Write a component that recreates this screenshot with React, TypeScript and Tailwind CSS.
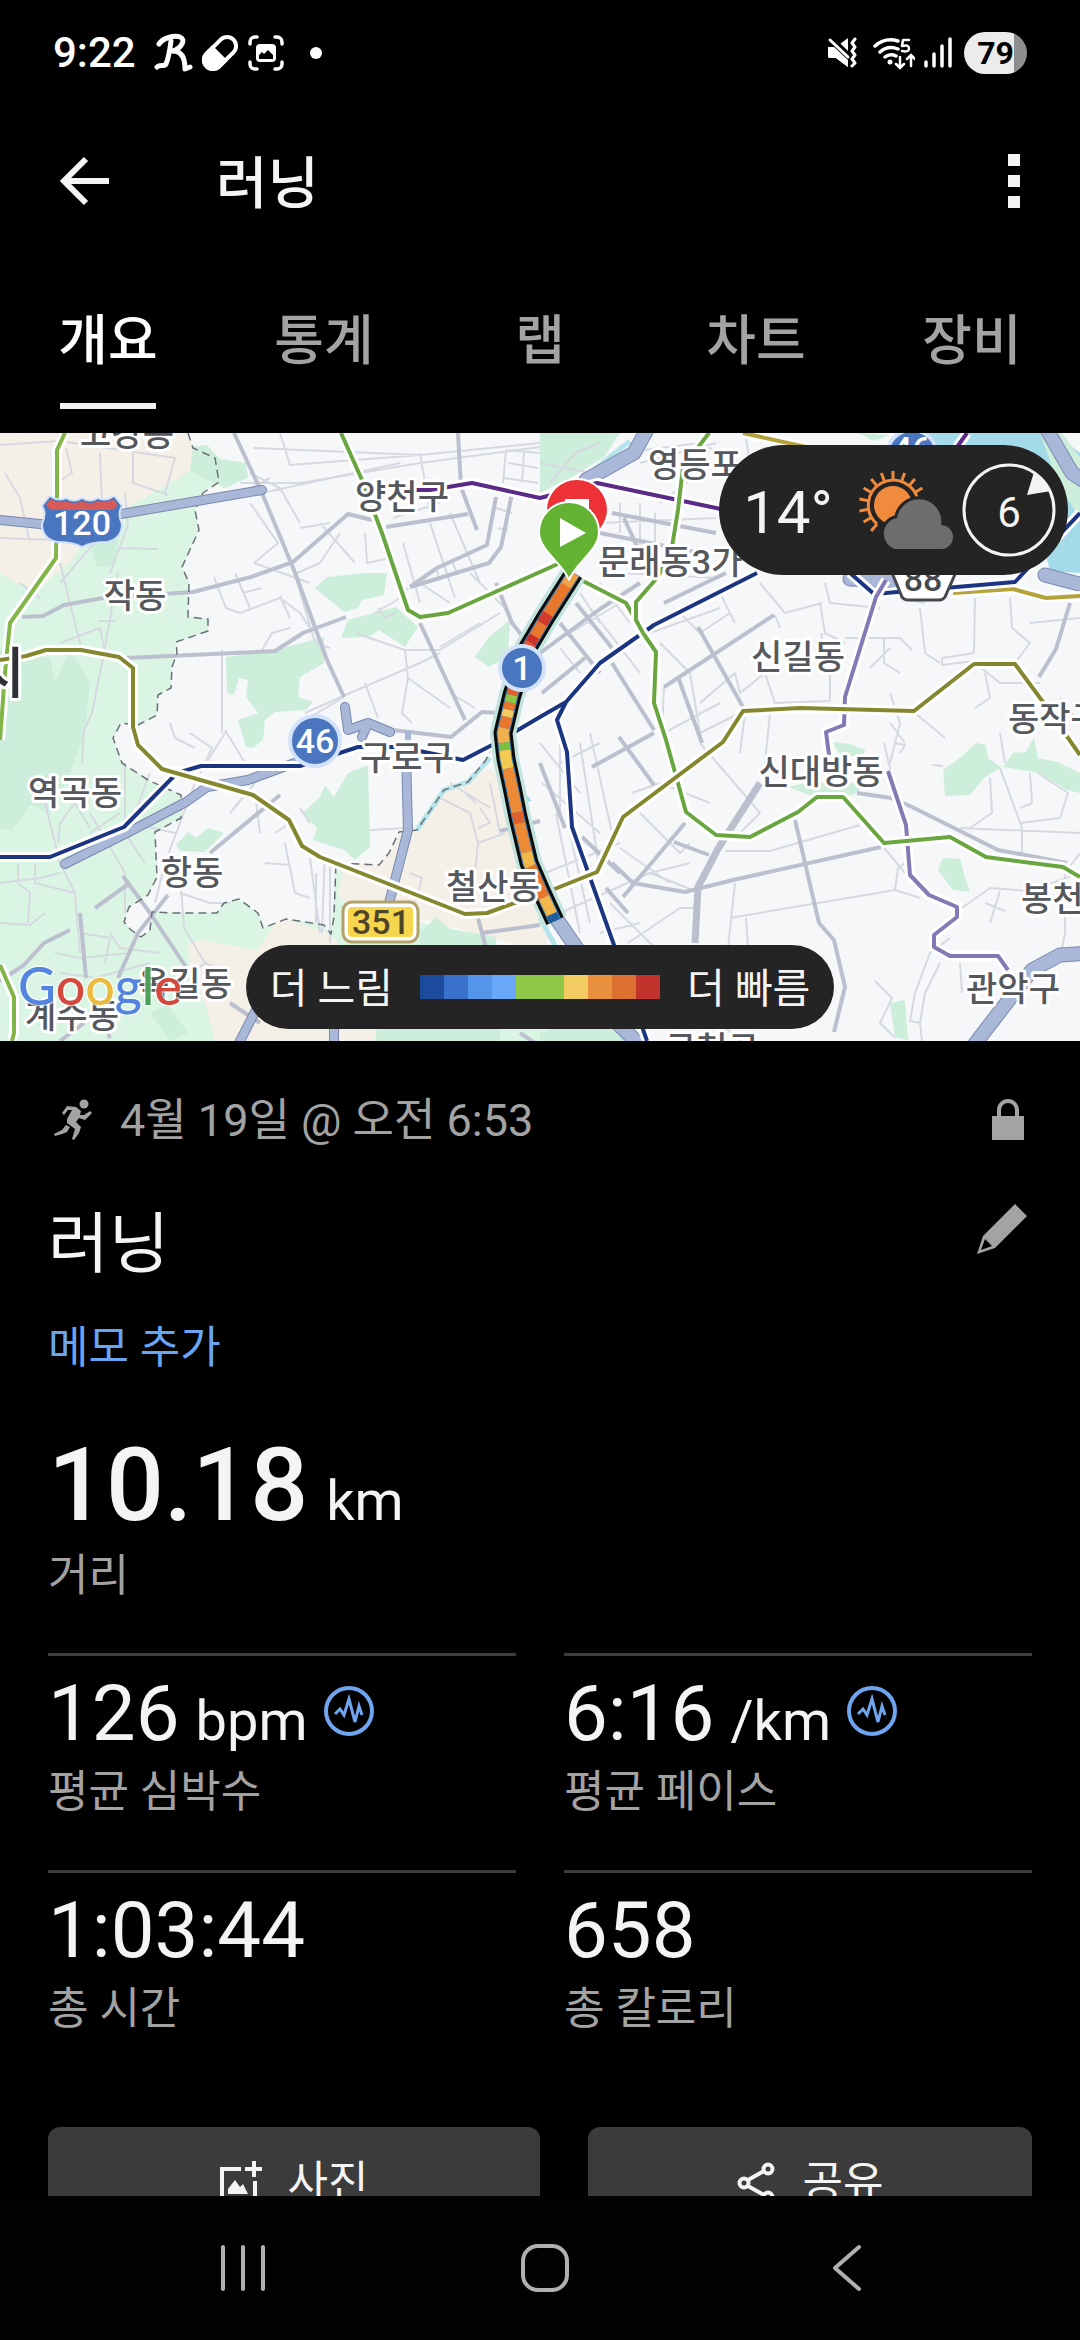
import { useState } from 'react';

const TABS = ['개요', '통계', '랩', '차트', '장비'];

const PACE_COLORS = [
  '#1c4a9c',
  '#3a72cb',
  '#5495ea',
  '#6ba7f8',
  '#8fc746',
  '#8fc746',
  '#f3cb63',
  '#e9903f',
  '#db7030',
  '#c2332c',
];

// start and length are percent of the route
const TRACK = [
  { start: 0, length: 5, color: '#f2a04a' },
  { start: 4, length: 10, color: '#e8762c' },
  { start: 13, length: 3, color: '#d43a2a' },
  { start: 16, length: 5, color: '#e8762c' },
  { start: 20, length: 2, color: '#c9302a' },
  { start: 22, length: 6, color: '#e5522b' },
  { start: 28, length: 2, color: '#8fc746' },
  { start: 30, length: 7, color: '#e0602c' },
  { start: 37, length: 2, color: '#8fc746' },
  { start: 39, length: 2, color: '#e8762c' },
  { start: 41, length: 2, color: '#f3cb63' },
  { start: 43, length: 3, color: '#e8762c' },
  { start: 46, length: 4, color: '#f2b04c' },
  { start: 50, length: 2, color: '#7cbf3a' },
  { start: 52, length: 5, color: '#f3cb50' },
  { start: 57, length: 12, color: '#ec8a35' },
  { start: 69, length: 3, color: '#e0602c' },
  { start: 72, length: 8, color: '#ec8a35' },
  { start: 80, length: 4, color: '#f3b84c' },
  { start: 84, length: 9, color: '#e8762c' },
  { start: 93, length: 5, color: '#f3b84c' },
  { start: 98, length: 2, color: '#1d5f9e' },
];

const ROUTE = 'M574 140 L546 184 L527 216 L512 262 L503 300 L506 326 L512 354 L518 384 L529 430 L542 460 L555 488';

// rays of the weather sun, in degrees clockwise from the top
const SUN_RAYS = [-140, -120, -100, -80, -60, -40, -20, 0, 20, 40, 60, 80];

const LABELS: { text: string; x: number; y: number; anchor?: 'start' | 'middle' | 'end' }[] = [
  { text: '고강동', x: 127, y: 13 },
  { text: '양천구', x: 402, y: 76 },
  { text: '작동', x: 135, y: 175 },
  { text: '영등포', x: 648, y: 44, anchor: 'start' },
  { text: '문래동3가', x: 598, y: 141, anchor: 'start' },
  { text: '신길동', x: 798, y: 236 },
  { text: '신대방동', x: 821, y: 351 },
  { text: '동작구', x: 1008, y: 298, anchor: 'start' },
  { text: '봉천동', x: 1021, y: 478, anchor: 'start' },
  { text: '관악구', x: 1013, y: 568 },
  { text: '역곡동', x: 75, y: 372 },
  { text: '항동', x: 192, y: 452 },
  { text: '철산동', x: 493, y: 466 },
  { text: '구로구', x: 407, y: 337 },
  { text: '옥길동', x: 185, y: 563 },
  { text: '계수동', x: 72, y: 595 },
  { text: '금천구', x: 712, y: 628 },
];

const LINES: { color: string; d: string }[] = [
  { color: '#5a2a86', d: 'M406 57 L430 57 L472 50 L540 65 L597 50 L716 75 L780 90 M967 0 L957 14' },
  { color: '#b5a23c', d: 'M743 0 L806 14 M953 160 L1013 156 L1046 165 L1080 163' },
  { color: '#1b3583', d: 'M0 424 L50 424 L124 394 L177 340 L201 333 L300 333 L358 314 L400 314 L463 327 L496 310 L540 284 L566 269 L600 230 L654 192 L757 140 M566 269 L557 287 L567 319 L572 394 L614 512 L647 608' },
  { color: '#1b3583', d: 'M850 140 L874 161 L1015 149 L1080 80' },
  { color: '#8479b4', d: 'M886 147 L876 164 L845 264 L844 292 L826 299 L829 322 M888 338 L906 392 L910 442 L929 462 L957 474 L957 484 L934 502 L934 514 L950 523 L998 523 L1008 537' },
  { color: '#82b548', d: 'M65 0 L57 17 L57 60 L56 125 L10 190 L5 240 L0 307 M0 532 L14 564 L14 600 L12 608' },
  { color: '#6aa63f', d: 'M341 0 L362 47 L382 100 L408 177 L420 184 L448 180 L540 139 L560 130 M581 147 L626 170 L643 200 L656 219 L654 270 L666 307 L686 379 L716 402 L750 404 L798 379 L817 364 L843 364 L884 410 L950 404 L986 424 L1063 434 L1080 444' },
  { color: '#6aa63f', d: 'M709 0 L683 34 L678 77 L671 120 L657 145 L636 169 L636 187 L643 200' },
  { color: '#85872f', d: 'M0 227 L26 223 L46 217 L81 217 L119 224 L133 235 L133 294 L138 312 L162 336 L253 362 L289 387 L302 413 L320 424 L465 481 L487 480 L517 469 L552 457 L597 439 L623 384 L723 309 L743 278 L800 275 L914 278 L974 231 L1015 231 L1043 269 L1080 322' },
];

const PARKS = [
  'M193 14 L207 12 L220 26 L246 30 L248 45 L225 55 L190 38Z',
  'M0 215 L50 225 L55 250 L70 215 L90 250 L85 300 L70 340 L50 380 L30 372 L12 398 L0 395Z',
  'M92 110 L118 104 L116 132 L96 134Z',
  'M315 155 L327 144 L365 140 L387 140 L384 162 L362 167 L358 175 L344 179Z',
  'M348 187 L396 174 L418 194 L405 214 L379 197 L368 204 L341 205Z',
  'M226 224 L275 217 L324 204 L324 230 L300 244 L298 264 L313 269 L306 277 L275 279 L265 287 L263 307 L253 315 L246 314 L238 287 L258 280 L246 264 L248 247 L239 245 L234 262 L227 260Z',
  'M475 224 L489 204 L510 187 L508 224 L489 234Z',
  'M303 380 L320 364 L325 352 L334 364 L348 340 L368 332 L370 414 L355 427 L344 417 L313 407 L317 395Z',
  'M176 412 L188 399 L196 405 L208 395 L224 400 L205 419 L180 418Z',
  'M943 337 L960 325 L976 310 L986 312 L988 325 L1001 334 L984 345 L970 362 L945 363Z',
  'M1003 334 L1013 320 L1026 319 L1034 304 L1038 325 L1057 329 L1080 340 L1080 360 L1067 357 L1039 340 L1022 337Z',
  'M938 437 L943 425 L960 426 L965 444 L970 459 L953 457Z',
  'M890 570 L905 567 L908 607 L895 604Z',
  'M833 309 L850 311 L865 317 L864 324 L840 322Z',
  'M788 354 L805 350 L867 350 L853 362 L815 364Z',
  'M420 500 L436 484 L450 496 L496 504 L496 540 L420 540Z',
  'M376 597 L392 592 L500 592 L500 608 L376 608Z',
  'M540 600 L560 594 L610 594 L625 608 L540 608Z',
  'M540 0 L620 0 L604 24 L572 44 L540 60Z',
  'M858 0 L874 8 L890 2Z',
  'M150 580 L168 572 L188 600 L170 608Z',
];

const MAJOR_ROADS = 'M234 0 L262 60 L294 137 L327 227 L344 264 M22 184 L43 183 L64 172 L103 165 L193 159 L251 144 L293 129 L348 81 L372 87 M386 94 L468 81 M126 225 L275 218 L303 200 L346 184 M458 0 L461 54 L477 97 M420 190 L465 287 M410 154 L489 130 L501 114 L506 90 L512 60 M410 154 L437 135 L487 112 L496 64 M393 297 L451 304 L482 279 L500 280 M496 150 L512 190 L524 205 M612 430 L633 450 L685 459 L733 447 L881 414 M795 387 L805 430 L819 490 L834 507 L845 554 L834 599 M857 360 L891 365 L910 373 L998 417 L1067 430 M592 334 L654 300 M623 464 L685 390 M619 304 L654 352 M674 409 L709 422 M664 254 L774 182 M664 170 L726 140 M612 230 L654 297 M698 194 L743 274 M1070 170 L1056 216 L1039 244 M678 244 L702 310 M540 330 L565 395 M123 443 L150 480 L190 540 M168 462 L138 500 L118 545 M80 480 L86 545 M0 548 L24 532 L44 510 L70 497 M95 475 L130 450 M500 398 L540 388 M482 500 L540 492 M230 570 L260 590 M478 485 L486 515 M60 608 L84 590 M110 605 L104 590 M210 420 L280 362 M520 600 L550 620 M582 404 L620 440 M606 455 L628 480 M540 220 L600 176 L640 150 M542 260 L585 225 M560 190 L600 240 M576 170 L612 215 M612 80 L716 100 M600 100 L700 120 M624 85 L640 120';

const MINOR_ROADS = 'M0 12 L60 8 L175 25 L165 60 M5 40 L20 65 L30 110 M100 20 L103 100 L60 150 M133 5 L133 50 L168 62 M66 15 L72 40 L60 48 M0 105 L55 107 M120 115 L158 116 M110 140 L128 92 L125 60 M118 140 L104 220 L92 280 L83 300 M60 130 L80 210 L84 220 M20 150 L40 165 M60 210 L100 195 L104 215 M98 188 L115 188 M84 297 L82 330 M254 15 L420 22 L540 10 M250 40 L280 55 L300 90 M240 50 L300 50 L420 30 L540 14 M280 0 L290 32 L420 22 M262 60 L400 30 M420 20 L430 80 M300 95 L330 90 M250 70 L278 110 L254 130 M254 130 L310 150 M297 140 L320 130 L340 100 M296 145 L315 210 L330 215 M214 144 L226 175 L240 180 L280 165 L300 180 L310 195 M235 140 L250 175 M243 160 L262 155 M280 163 L290 185 M262 217 L272 200 L290 195 M240 60 L270 45 M222 217 L222 300 M365 100 L367 130 L390 125 M403 110 L420 170 M430 90 L455 165 M450 80 L480 150 M375 180 L400 165 L408 155 M378 175 L385 185 L396 180 M393 85 L440 70 M320 90 L355 130 M355 200 L405 217 L440 217 L500 180 M440 214 L480 190 M405 217 L408 245 L450 275 M408 245 L402 280 L412 290 M305 280 L350 260 L420 230 L440 220 M365 250 L378 285 M450 260 L475 275 M170 290 L175 305 L195 315 M344 264 L300 290 M506 17 L540 20 M504 45 L538 50 M508 30 L538 35 M506 17 L503 50 M524 18 L522 50 M496 75 L512 80 M498 95 L508 97 M436 135 L440 148 M452 128 L457 140 M420 150 L450 170 M470 140 L510 180 M190 300 L212 315 L205 330 M200 340 L225 300 M230 380 L255 350 M225 297 L245 330 M255 360 L260 400 M195 350 L165 430 L155 470 M60 390 L75 370 L90 395 M60 390 L58 410 M90 380 L125 440 L125 480 M40 350 L60 430 L75 460 L80 520 M0 450 L40 445 L60 440 M18 430 L18 450 L30 460 L28 490 M35 430 L35 450 L75 460 M0 490 L30 492 L45 480 M120 380 L90 400 M125 330 L125 400 L145 430 M150 340 L135 380 M100 400 L130 390 L175 400 M80 500 L110 505 L105 530 M55 520 L80 525 L130 520 M60 540 L95 545 L150 530 M110 500 L120 515 L160 520 M180 440 L184 495 L205 530 L230 540 M180 460 L210 470 L230 470 M205 530 L185 545 M275 400 L290 390 M285 410 L295 460 L310 465 M265 430 L290 432 M300 375 L310 390 M310 425 L320 500 M325 420 L322 500 M330 430 L330 510 M316 440 L316 490 M370 397 L405 395 M410 440 L422 445 L415 470 M440 365 L470 380 L478 410 L475 440 M450 350 L490 375 M476 370 L465 360 M480 375 L490 390 L478 395 M478 410 L505 400 M475 440 L455 470 M490 350 L500 400 M550 50 L575 20 L600 10 M540 30 L590 40 M620 70 L620 100 M640 70 L640 140 M655 80 L655 135 M600 90 L716 85 M620 20 L700 10 L740 30 M640 30 L716 10 M745 0 L750 30 M700 40 L660 70 M590 175 L640 240 M560 215 L580 240 M570 200 L620 170 M580 160 L600 190 M600 150 L630 190 M620 140 L720 145 M660 210 L690 240 L700 300 M650 200 L720 175 M664 254 L662 300 M664 300 L720 270 M700 270 L735 240 M735 240 L740 260 L765 240 M760 150 L785 180 L822 170 M720 160 L735 190 M680 180 L700 200 L730 180 M825 150 L830 170 L880 175 M820 170 L825 200 L845 210 M775 182 L780 195 M822 200 L820 230 M884 205 L884 230 L900 240 M845 205 L900 205 L912 217 M870 235 L890 215 M920 175 L925 220 L940 230 M900 165 L925 170 M975 165 L974 220 L942 225 M1010 165 L1012 195 L1030 210 L1015 230 M1030 190 L1080 185 M942 225 L942 232 L975 228 M975 230 L1000 250 L1040 250 M765 240 L775 270 L830 268 M830 240 L830 268 M745 280 L740 320 M770 280 L765 330 M890 260 L900 290 L890 330 M915 280 L945 305 M890 290 L905 310 M985 240 L990 265 L975 275 M1060 265 L1080 290 M700 300 L740 280 M700 310 L760 380 L740 400 M580 310 L600 440 M590 300 L612 400 M560 330 L600 310 M560 300 L560 380 M540 310 L580 360 M542 350 L600 400 M556 380 L580 500 M570 400 L590 490 M590 430 L600 470 M545 440 L620 410 M560 480 L650 440 L700 460 M600 500 L640 490 M610 470 L660 520 M632 360 L660 350 L710 370 M640 380 L680 420 L690 410 M620 415 L670 450 M650 440 L690 430 M725 418 L770 418 L860 392 M730 485 L895 457 L920 465 M746 485 L748 515 M895 457 L898 435 L905 430 M735 450 L728 515 M628 510 L680 475 L695 475 M880 410 L905 440 M884 310 L896 360 M895 310 L905 312 L900 320 M1000 335 L1022 395 L1022 420 M990 345 L992 380 L970 395 M1038 340 L1068 360 L1060 385 L1020 390 M960 395 L1080 400 M1030 340 L1032 370 L1020 375 M1000 300 L1005 330 M932 332 L943 333 M962 475 L990 455 L1030 458 L1080 440 M1000 458 L990 490 M985 470 L1005 478 M1080 420 L1065 440 L1065 500 L1060 525 M950 505 L930 520 L915 560 L910 588 L920 590 L925 560 L940 530 M875 548 L892 565 L880 590 L895 605 M920 590 L922 608 M960 530 L962 560 M720 590 L740 608';

export default function App() {
  return (
    <div className="flex h-screen flex-col overflow-hidden bg-black font-['Roboto','Noto_Sans_CJK_KR',sans-serif] text-[#f4f4f4]">
      <StatusBar />
      <Header />
      <Tabs />
      <main className="min-h-0 flex-1 overflow-hidden">
        <MapPanel />
        <Summary />
      </main>
      <NavBar />
    </div>
  );
}

function StatusBar() {
  return (
    <div className="flex h-[106px] shrink-0 items-center justify-between px-[53px] text-white">
      <div className="flex items-center">
        <span className="text-[42px] leading-none font-medium">9:22</span>
        <svg className="ml-[18px]" width="40" height="40" viewBox="0 0 40 40" fill="none" stroke="currentColor" strokeLinecap="round" strokeLinejoin="round">
          <path d="M5 11 C9 5 20 2 26 4 C32 6 28 15 19 18" strokeWidth="5" />
          <path d="M17 8 C16 16 15 24 12 31 C10 34 6 31 3 34" strokeWidth="5" />
          <path d="M19 18 C27 18 31 24 31 36 L36 34" strokeWidth="5" />
        </svg>
        <svg className="ml-[6px]" width="40" height="40" viewBox="0 0 40 40">
          <g transform="rotate(45 20 20)">
            <rect x="11" y="1" width="18" height="38" rx="9" fill="none" stroke="currentColor" strokeWidth="4" />
            <path d="M9 20 h22 v10 a11 11 0 0 1 -22 0z" fill="currentColor" />
          </g>
        </svg>
        <svg className="ml-[8px]" width="36" height="36" viewBox="0 0 36 36" fill="none" stroke="currentColor" strokeWidth="3.5" strokeLinecap="round">
          <path d="M2 9 V7 a5 5 0 0 1 5 -5 H9 M27 2 h2 a5 5 0 0 1 5 5 V9 M34 27 v2 a5 5 0 0 1 -5 5 h-2 M9 34 H7 a5 5 0 0 1 -5 -5 v-2" />
          <rect x="8" y="9" width="20" height="18" rx="4" fill="currentColor" stroke="none" />
          <path d="M11 24 v-4 l3 -3 2 2 4 -4 5 5 v4z" fill="#000" stroke="none" />
        </svg>
        <span className="ml-[26px] size-[12px] rounded-full bg-white" />
      </div>
      <div className="flex items-center">
        <svg width="32" height="32" viewBox="0 0 32 32">
          <path d="M1 12 q0 -2 2 -2 h6 L21 1 v29 L9 21 H3 q-2 0 -2 -2z" fill="currentColor" />
          <path d="M-1 -1 L23 22" stroke="#000" strokeWidth="9" />
          <path d="M1 10 h6 l14 13 v7 L9 21 H3 q-2 0 -2 -2z" fill="currentColor" />
          <path d="M3 3 L21 20" stroke="currentColor" strokeWidth="3" strokeLinecap="round" />
          <path d="M28 2 l-3 4 3 4 -3 4 3 4 -3 4 3 4 -3 3" fill="none" stroke="currentColor" strokeWidth="3" strokeLinecap="round" strokeLinejoin="round" />
        </svg>
        <svg className="ml-[14px]" width="42" height="34" viewBox="0 0 42 34" fill="none" stroke="currentColor" strokeWidth="3.5" strokeLinecap="round">
          <path d="M2 10 Q12 1 25 5 M7 16 Q15 9 25 13 M12 21 Q17 17 23 20" />
          <circle cx="17" cy="26" r="2.5" fill="currentColor" stroke="none" />
          <path d="M36 4 h-6 l-1 6 q7 -2 7 2.5 q0 4 -7 2.5" strokeWidth="2.5" strokeLinejoin="round" />
          <path d="M27 21 v10 M23 28 l4 4 4 -4 M38 30 V20 M34 23 l4 -4 4 4" strokeWidth="2.5" />
        </svg>
        <svg className="ml-[9px]" width="28" height="32" viewBox="0 0 28 32" stroke="currentColor" strokeWidth="3.5" strokeLinecap="round">
          <path d="M2 25 V29 M10 17 V29 M18 9 V29 M26 2 V29" />
        </svg>
        <div className="ml-[12px] flex h-[42px] w-[63px] items-center justify-center rounded-full bg-[linear-gradient(90deg,#ececec_79%,#8e8e8e_79%)] text-[32px] leading-none font-bold text-black">
          79
        </div>
      </div>
    </div>
  );
}

function Header() {
  return (
    <header className="flex h-[150px] shrink-0 items-center justify-between pr-[48px] pl-[54px]">
      <div className="flex items-center">
        <button type="button" aria-label="뒤로" className="flex size-[60px] items-center justify-center">
          <svg width="50" height="50" viewBox="0 0 50 50" fill="none" stroke="currentColor" strokeWidth="6">
            <path d="M50 25 H5 M27 3 L5 25 L27 47" />
          </svg>
        </button>
        <h1 className="ml-[102px] pt-[6px] text-[56px] leading-none font-medium">러닝</h1>
      </div>
      <button type="button" aria-label="더보기" className="flex h-[60px] w-[36px] flex-col items-center justify-center gap-[9px]">
        <span className="size-[12px] bg-current" />
        <span className="size-[12px] bg-current" />
        <span className="size-[12px] bg-current" />
      </button>
    </header>
  );
}

function Tabs() {
  const [active, setActive] = useState(0);

  return (
    <div role="tablist" className="grid h-[177px] shrink-0 grid-cols-5 pb-[24px]">
      {TABS.map((tab, i) => (
        <button
          key={tab}
          type="button"
          role="tab"
          aria-selected={i === active}
          onClick={() => setActive(i)}
          className={`flex flex-col items-center justify-end text-[54px] leading-none font-medium ${
            i === active ? 'text-white' : 'text-[#a3a3a3]'
          }`}
        >
          <span className="mb-[34px]">{tab}</span>
          <span className={`h-[6px] w-[96px] ${i === active ? 'bg-[#f0f0f0]' : 'bg-transparent'}`} />
        </button>
      ))}
    </div>
  );
}

function MapPanel() {
  return (
    <section className="relative h-[608px] overflow-hidden bg-[#f6f7f8]">
      <RouteMap />
      <div className="absolute top-[12px] right-[12px] flex h-[130px] items-center rounded-full bg-[#242424] pr-[11px] pl-[24px]">
        <span className="pt-[6px] text-[60px] leading-none">14°</span>
        <svg className="ml-[24px]" width="104" height="90" viewBox="0 0 104 90">
          <g stroke="#f08a3c" strokeWidth="3" fill="none">
            <path d="M20 59 A25 25 0 1 1 61 36" />
            {SUN_RAYS.map((angle) => (
              <path key={angle} d="M36 15 V6" transform={`rotate(${angle} 36 40)`} />
            ))}
          </g>
          <circle cx="36" cy="40" r="19" fill="#f08a3c" />
          <path d="M38 84 a16 16 0 0 1 2 -31 a22 22 0 0 1 44 7 a12 12 0 0 1 0 24z" fill="#6d6d6d" stroke="#242424" strokeWidth="6" paintOrder="stroke" />
        </svg>
        <div className="relative flex size-[96px] items-center justify-center">
          <svg className="absolute inset-0" width="96" height="96" viewBox="0 0 96 96">
            <circle cx="48" cy="48" r="45" fill="none" stroke="#f4f4f4" strokeWidth="3" />
            <path d="M73 10 Q84 17 90 29 L66 33Z" fill="#f4f4f4" />
          </svg>
          <span className="pt-[6px] text-[42px] leading-none">6</span>
        </div>
      </div>
      <div className="absolute inset-x-0 bottom-[12px] flex justify-center">
        <div className="flex h-[84px] items-center gap-[27px] rounded-full bg-[#242424] px-[24px] text-[41px] leading-none">
          <span className="pt-[4px]">더 느림</span>
          <div className="flex">
            {PACE_COLORS.map((color, i) => (
              <span key={i} className="size-[24px]" style={{ background: color }} />
            ))}
          </div>
          <span className="pt-[4px]">더 빠름</span>
        </div>
      </div>
    </section>
  );
}

function RouteMap() {
  return (
    <svg className="block h-full w-full" viewBox="0 0 1080 608" preserveAspectRatio="xMidYMid slice" strokeLinejoin="round">
      {/* land cover */}
      <path fill="#f6f7f8" d="M0 0H1080V608H0Z" />
      <path
        fill="#daf5e4"
        d="M0 0 L188 0 L193 15 L215 25 L219 49 L203 60 L195 77 L199 97 L182 134 L189 150 L188 184 L208 186 L208 198 L176 209 L172 234 L171 255 L158 262 L157 282 L138 292 L121 290 L113 305 L122 330 L148 347 L181 362 L181 385 L155 399 L157 444 L148 462 L129 474 L124 489 L131 497 L141 504 L150 497 L152 479 L217 480 L224 470 L239 466 L258 480 L263 495 L286 486 L324 492 L331 501 L336 430 L346 432 L350 470 L496 510 L560 608 L0 608Z"
      />
      <path fill="#f5f0e7" d="M0 0 L188 0 L193 15 L190 38 L158 57 L130 72 L118 100 L86 107 L69 130 L34 160 L0 140Z" />
      <path fill="#f5f0e7" d="M188 512 L200 507 L258 517 L275 490 L286 486 L331 501 L345 520 L380 600 L370 608 L215 608 L205 570 L190 545Z" />
      <path fill="#f5f0e7" d="M345 430 L379 432 L389 420 L399 399 L417 397 L444 357 L468 349 L490 335 L503 350 L520 430 L550 490 L545 520 L430 488 L345 470 L338 460Z" />
      {PARKS.map((d, i) => (
        <path key={i} d={d} fill="#cdeedb" />
      ))}
      <path fill="#a3dbe9" d="M905 0 L1055 0 L1080 20 L1080 140 L1050 138 L1040 100 L920 30Z" />
      <path fill="#cdeedb" d="M1040 0 L1062 0 L1080 24 L1080 86 L1058 50Z" />
      <path fill="#a3dbe9" d="M516 350 L532 368 L520 370Z" />
      <path fill="none" stroke="#b5e4ea" strokeWidth="5" d="M417 397 L444 357 L468 349 L490 325 M540 485 L562 525 M600 560 L625 608 M590 40 L630 8" />

      {/* roads */}
      <path fill="none" stroke="#d6d9e1" strokeWidth="2" d={MINOR_ROADS} />
      <path fill="none" stroke="#bcbfcd" strokeWidth="4" d={MAJOR_ROADS} />
      <path fill="none" stroke="#b9bfcd" strokeWidth="7" d="M760 350 L719 414 L698 454 L695 510" />

      {/* district border */}
      <path
        fill="none"
        stroke="#6b7078"
        strokeWidth="1.5"
        strokeDasharray="8 5"
        d="M188 0 L193 15 L215 25 L219 49 L203 60 L195 77 L199 97 L182 134 L189 150 L188 184 L208 186 L208 198 L176 209 L177 220 L172 234 L171 255 L158 262 L157 282 L138 292 L121 290 L113 305 L122 330 L148 347 L181 362 L181 385 L155 399 L157 444 L148 462 L129 474 L124 489 L131 497 L141 504 L150 497 L152 479 L172 480 L217 480 L224 470 L239 466 L258 480 L263 495 L286 486 L324 492 L331 501 L334 484 L336 430 L379 432 L389 420 L399 399 L417 397 L444 357 L468 349 L486 327 L496 304"
      />

      {/* expressways */}
      <g fill="none" strokeLinecap="round">
        <path stroke="#7988ad" strokeWidth="10" d="M0 87 L50 92 M115 82 L262 57 M65 431 L127 400 L186 369 L207 354 L248 347 L300 328 M406 320 L408 397 L389 470 M262 565 L238 612 M334 590 L334 608 M345 274 L348 297 L368 290 L390 299 M362 304 L368 290" />
        <path stroke="#a9b8d8" strokeWidth="8" d="M0 87 L50 92 M115 82 L262 57 M65 431 L127 400 L186 369 L207 354 L248 347 L300 328 M406 320 L408 397 L389 470 M262 565 L238 612 M334 590 L334 608 M345 274 L348 297 L368 290 L390 299 M362 304 L368 290" />
        <path stroke="#a9b8d8" strokeWidth="6" d="M408 300 V316" />
        <path stroke="#7988ad" strokeWidth="15" d="M974 612 L1032 537 L1060 522 L1090 520 M558 488 L580 520 M612 585 L640 612 M648 -5 L634 20 L586 47 M850 146 L900 148 M1046 -5 L1072 40 L1090 52 M1045 142 L1090 154" />
        <path stroke="#a9b8d8" strokeWidth="13" d="M974 612 L1032 537 L1060 522 L1090 520 M558 488 L580 520 M612 585 L640 612 M648 -5 L634 20 L586 47 M850 146 L900 148 M1046 -5 L1072 40 L1090 52 M1045 142 L1090 154" />
      </g>

      {/* subway lines */}
      {LINES.map(({ color, d }, i) => (
        <g key={i} fill="none">
          <path d={d} stroke="#fff" strokeWidth="10" />
          <path d={d} stroke={color} strokeWidth="4" />
        </g>
      ))}

      {/* recorded route */}
      <g fill="none">
        <path d={ROUTE} stroke="#c3e3dd" strokeWidth="26" />
        <path d={ROUTE} stroke="#0b0b0b" strokeWidth="19" />
        <path d={ROUTE} stroke="#3f7fb5" strokeWidth="13" />
        {TRACK.map(({ start, length, color }) => (
          <path
            key={start}
            d={ROUTE}
            pathLength="100"
            stroke={color}
            strokeWidth="11"
            strokeDasharray={`${length} 200`}
            strokeDashoffset={-start}
          />
        ))}
      </g>

      {/* place names */}
      <g fontSize="34" fontWeight="500" fill="#55585d" stroke="#fff" strokeWidth="6" paintOrder="stroke">
        {LABELS.map(({ text, x, y, anchor = 'middle' }) => (
          <text key={text} x={x} y={y} textAnchor={anchor}>
            {text}
          </text>
        ))}
      </g>
      <text x="25" y="260" textAnchor="end" fontSize="56" fontWeight="500" fill="#2f3136" stroke="#fff" strokeWidth="6" paintOrder="stroke">
        시
      </text>

      {/* road signs */}
      <g textAnchor="middle" fontWeight="500" fill="#fff">
        <path d="M50 64 q8 6 16 2 q8 5 16 0 q8 5 16 0 q8 4 16 -2 l7 9 q-5 7 0 18 q0 14 -14 17 q-16 0 -25 5 q-9 -5 -25 -5 q-14 -3 -14 -17 q5 -11 0 -18z" fill="#4a76bf" stroke="#d3e2fb" strokeWidth="4" paintOrder="stroke" />
        <path d="M51 66 q7 5 15 2 q8 4 16 0 q8 4 16 0 q8 3 15 -2 l5 6 q-4 3 -4 5 H50 q0 -2 -4 -5z" fill="#d75a5a" />
        <text x="82" y="102" fontSize="34">120</text>
        <circle cx="522" cy="235" r="22" fill="#4a76bf" stroke="#d3e2fb" strokeWidth="4" />
        <text x="522" y="247" fontSize="34">1</text>
        <circle cx="315" cy="308" r="25" fill="#4a76bf" stroke="#d3e2fb" strokeWidth="4" />
        <text x="315" y="320" fontSize="34">46</text>
        <circle cx="912" cy="22" r="25" fill="#4a76bf" stroke="#d3e2fb" strokeWidth="4" />
        <text x="912" y="28" fontSize="34">46</text>
        <path d="M888 130 H960 L945 164 Q943 167 939 167 H908 Q904 167 902 164Z" fill="#fff" stroke="#45484d" strokeWidth="3" />
        <text x="923" y="158" fontSize="34" fill="#45484d">88</text>
        <rect x="343" y="469" width="75" height="40" rx="9" fill="#fff" stroke="#b3a16b" strokeWidth="3" />
        <rect x="348" y="474" width="65" height="30" rx="4" fill="#f7d64f" />
        <text x="381" y="501" fontSize="34" fill="#4d4429">351</text>
      </g>

      {/* finish and start pins */}
      <path d="M577 126 C572 112 546 98 546 77 A31 31 0 0 1 608 77 C608 98 582 112 577 126Z" fill="#ec3237" stroke="#fff" strokeWidth="2" />
      <rect x="565" y="66" width="24" height="24" fill="#fff" />
      <path d="M569 147 C563 130 539 118 539 99 A30 30 0 0 1 599 99 C599 118 575 130 569 147Z" fill="#64b232" stroke="#fff" strokeWidth="2" />
      <path d="M560 85 L586 100 L560 114Z" fill="#fff" />

      <text x="18" y="572" fontSize="52" fontWeight="500" className="font-['Lato',sans-serif]" stroke="#fff" strokeWidth="3" paintOrder="stroke" strokeOpacity="0.6">
        <tspan fill="#5584e0">G</tspan>
        <tspan fill="#d5483c">o</tspan>
        <tspan fill="#ecbb3d">o</tspan>
        <tspan fill="#5584e0">g</tspan>
        <tspan fill="#4b9f57">l</tspan>
        <tspan fill="#d5483c">e</tspan>
      </text>
    </svg>
  );
}

function Summary() {
  return (
    <section className="px-[48px] pt-[50px]">
      <div className="flex h-[58px] items-center justify-between text-[#a3a3a3]">
        <div className="flex items-center">
          <svg className="ml-[6px]" width="38" height="42" viewBox="0 0 38 42" fill="currentColor">
            <circle cx="30" cy="5" r="4.5" />
            <path d="M13 7 L22 8 L27 12 L26 16 L30 16 L36 12 L38 14 L31 21 L25 19 L22 23 L27 28 L25 34 L20 41 L18 40 L21 30 L13 24 L13 20 L18 11 L14 11 L10 16 L8 14Z" />
            <path d="M12 26 L16 28 L13 33 L8 35 L1 37 L0 35 L8 31Z" />
          </svg>
          <span className="ml-[28px] text-[45px] leading-none">4월 19일 @ 오전 6:53</span>
        </div>
        <svg className="mr-[8px]" width="32" height="42" viewBox="0 0 32 42">
          <path d="M0 17 H32 V41 H0Z" fill="currentColor" />
          <path d="M7 18 V11 a9 9 0 0 1 18 0 V18" fill="none" stroke="currentColor" strokeWidth="4" />
        </svg>
      </div>

      <div className="mt-[48px] flex items-start justify-between">
        <h2 className="pt-[8px] text-[66px] leading-[80px]">러닝</h2>
        <button type="button" aria-label="이름 편집" className="mt-[6px] mr-[4px] text-[#a3a3a3]">
          <svg width="52" height="52" viewBox="0 0 52 52" fill="currentColor">
            <path fillRule="evenodd" d="M39 1 L51 13 L19 45 L1 51 L7 33Z M9 36 L5 47 L16 43Z" />
          </svg>
        </button>
      </div>

      <a href="#memo" className="mt-[35px] block text-[44px] leading-[56px] text-[#6aa5f4]">
        메모 추가
      </a>

      <div className="mt-[64px] flex h-[90px] items-baseline">
        <span className="text-[102px] leading-[90px] font-medium">10.18</span>
        <span className="ml-[18px] text-[56px] leading-none">km</span>
      </div>
      <p className="mt-[22px] text-[44px] leading-[48px] text-[#a3a3a3]">거리</p>

      <div className="mt-[53px] grid grid-cols-2 gap-x-[48px]">
        <Stat value="126" unit="bpm" label="평균 심박수" chart />
        <Stat value="6:16" unit="/km" label="평균 페이스" chart />
        <Stat value="1:03:44" label="총 시간" />
        <Stat value="658" label="총 칼로리" />
      </div>

      <div className="mt-[40px] grid grid-cols-[41fr_37fr] gap-[48px]">
        <button type="button" className="flex h-[112px] items-center justify-center gap-[26px] rounded-[12px] bg-[#3b3b3b] text-[44px] leading-none">
          <svg width="42" height="44" viewBox="0 0 42 44" fill="none" stroke="currentColor" strokeWidth="4">
            <path d="M21 8 H2 V42 H35 V20 M34 0 V16 M25 8 H42" />
            <path d="M8 33 L8 28 L15 19 L20 26 L23 23 L28 33Z" fill="currentColor" stroke="none" />
          </svg>
          사진
        </button>
        <button type="button" className="flex h-[112px] items-center justify-center gap-[28px] rounded-[12px] bg-[#3b3b3b] text-[44px] leading-none">
          <svg width="38" height="42" viewBox="0 0 38 42" fill="none" stroke="currentColor" strokeWidth="4">
            <circle cx="31" cy="7" r="4.5" />
            <circle cx="7" cy="21" r="4.5" />
            <circle cx="31" cy="35" r="4.5" />
            <path d="M11 18 L27 9 M11 24 L27 33" />
          </svg>
          공유
        </button>
      </div>
    </section>
  );
}

function Stat({ value, unit, label, chart }: { value: string; unit?: string; label: string; chart?: boolean }) {
  return (
    <div className="h-[217px] border-t-[3px] border-[#3d3d3d] pt-[18px]">
      <div className="flex h-[80px] items-start">
        <span className="flex items-baseline">
          <span className="text-[78px] leading-[80px]">{value}</span>
          {unit && <span className="ml-[16px] text-[56px] leading-none">{unit}</span>}
        </span>
        {chart && (
          <svg className="mt-[12px] ml-[16px] shrink-0 text-[#6fa4ee]" width="50" height="50" viewBox="0 0 50 50" fill="none" stroke="currentColor" strokeWidth="4">
            <circle cx="25" cy="25" r="23" />
            <path d="M11 28 L16 23 L20 29 L25 13 L31 36 L35 20 L38 29" strokeWidth="3" />
          </svg>
        )}
      </div>
      <p className="mt-[14px] text-[44px] leading-[48px] text-[#a3a3a3]">{label}</p>
    </div>
  );
}

function NavBar() {
  return (
    <nav className="grid h-[144px] shrink-0 grid-cols-3 items-center bg-[#020202] pr-[82px] pl-[92px] text-[#b0b0b0]">
      <button type="button" aria-label="최근 앱" className="flex justify-center">
        <svg width="44" height="48" viewBox="0 0 44 48" fill="none" stroke="currentColor" strokeWidth="4" strokeLinecap="round">
          <path d="M2 3 V45 M22 3 V45 M42 3 V45" />
        </svg>
      </button>
      <button type="button" aria-label="홈" className="flex justify-center">
        <svg width="50" height="50" viewBox="0 0 50 50" fill="none" stroke="currentColor" strokeWidth="4">
          <rect x="3" y="3" width="44" height="44" rx="15" />
        </svg>
      </button>
      <button type="button" aria-label="이전" className="flex justify-center">
        <svg width="30" height="48" viewBox="0 0 30 48" fill="none" stroke="currentColor" strokeWidth="4" strokeLinecap="round" strokeLinejoin="round">
          <path d="M27 3 L3 24 L27 45" />
        </svg>
      </button>
    </nav>
  );
}
